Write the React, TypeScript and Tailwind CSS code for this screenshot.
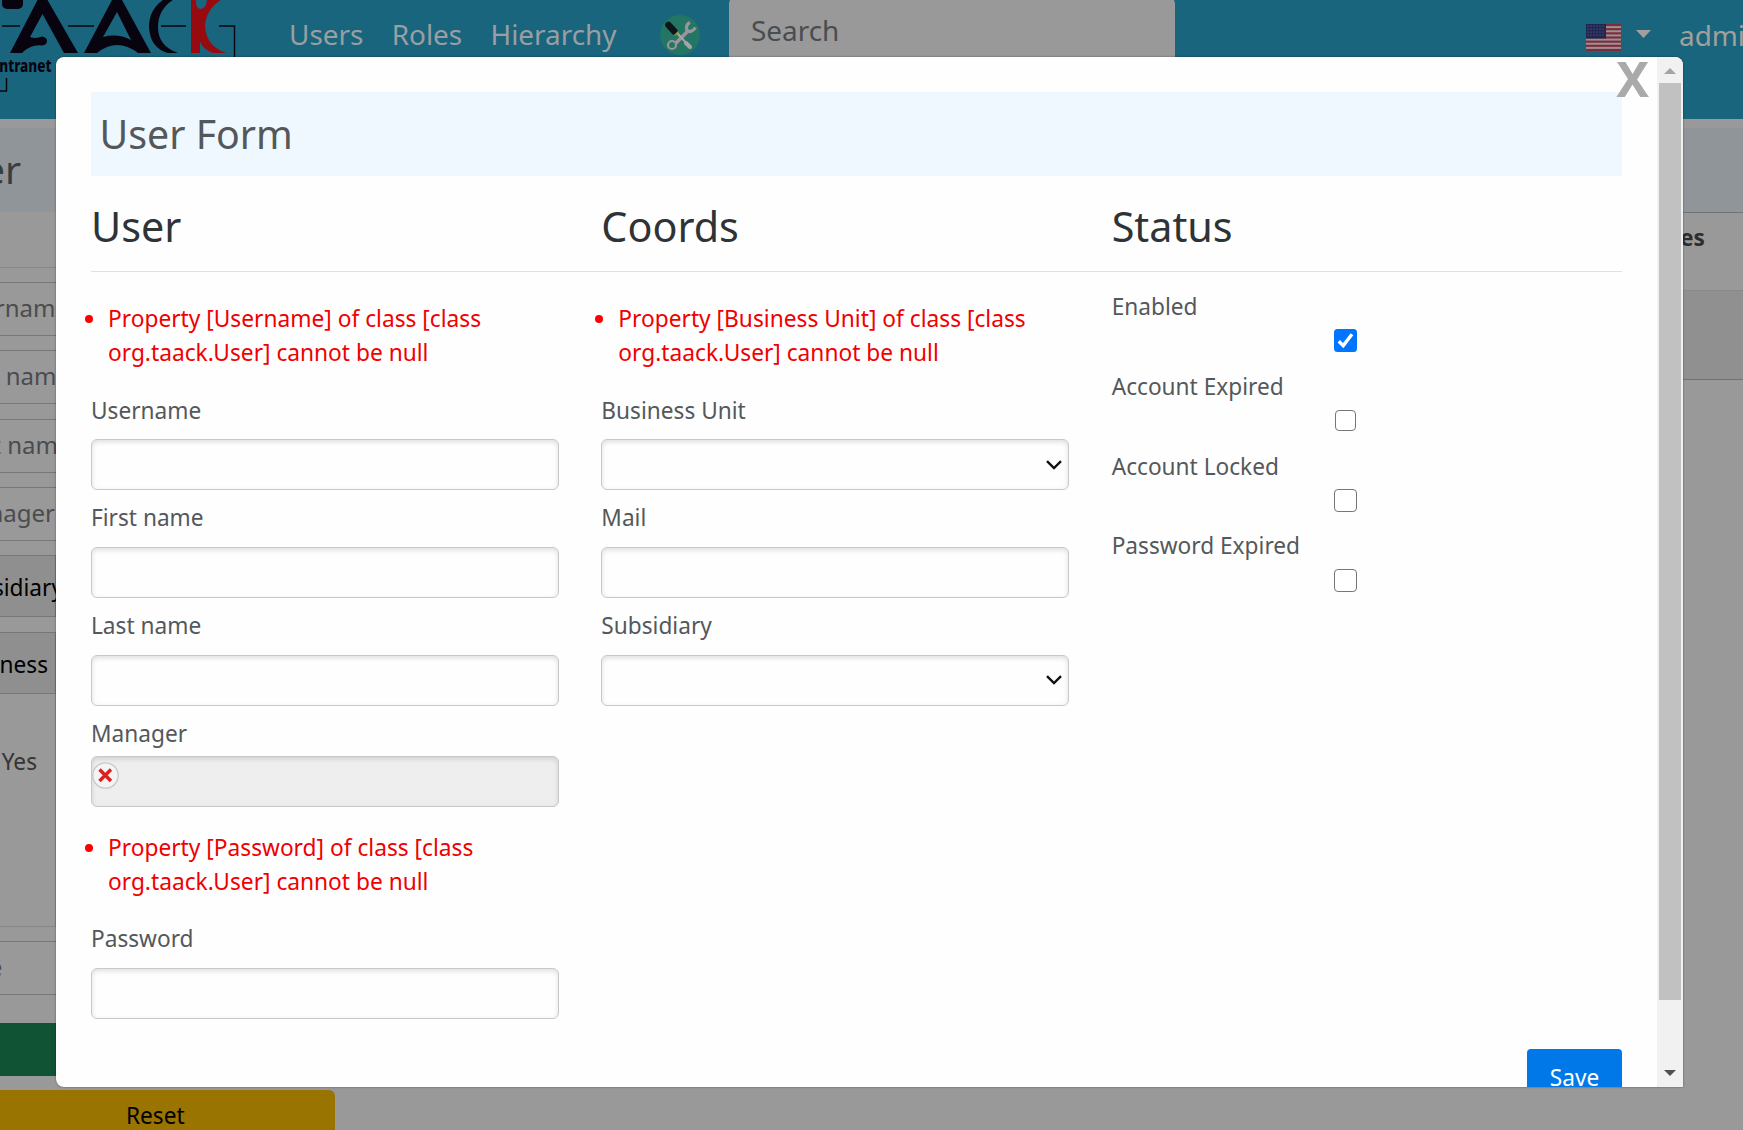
import React from "react";

function Logo() {
  return (
    <svg className="h-[95px] w-[240px] shrink-0" viewBox="0 0 240 95" fill="#08040f">
      <rect x="2" y="-4" width="21" height="13" rx="5" />
      <path d="M2 26H20M68 26H94M161 26H186M219 26H234.500V60M0 91H6.500V78" fill="none" stroke="#08040f" strokeWidth="1.4" />
      <path d="M10 53L37.500 0Q42.500 -4 47.500 0L78 53H64L42.500 14L30 37Q36 39 42 36.500Q47 37 47 41Q47 45 42 45.500Q31 44 22 53Z" />
      <path fillRule="evenodd" d="M84 53L112 0Q117 -4 122 0L151 53H138Q117 37 97 53ZM117 12L103 37Q118 33 131 40Z" />
      <path d="M166 -2Q149 8 149 27Q150 48 168 53H178Q158 46 158 27Q158 8 176 -2Z" />
      <path fill="#970b10" d="M191 -2H196Q195 9 201 9Q207 8 207 -2H224Q206 8 205 26Q206 46 226 53H213Q204 50 200 42V53H191Z" />
      <text x="-5" y="71.500" fontSize="17.500" fontWeight="800" fontFamily="Noto Sans, sans-serif" textLength="56.500" lengthAdjust="spacingAndGlyphs">intranet</text>
    </svg>
  );
}

function ToolsIcon() {
  return (
    <svg className="h-[42px] w-[42px] shrink-0" viewBox="0 0 42 42">
      <circle cx="21" cy="21" r="20" fill="#237564" />
      <g strokeLinecap="round" fill="none">
        <path d="M14 32L29 17" stroke="#9b949b" strokeWidth="3.600" />
        <circle cx="13" cy="31" r="4" stroke="#9b949b" strokeWidth="2.200" fill="#237564" />
        <path d="M31 8.500Q26 11 28 17Q33 19 36.500 13.500" stroke="#9b949b" strokeWidth="3.200" strokeLinecap="butt" />
        <path d="M18 19L31 33" stroke="#a9a3a9" strokeWidth="2" />
        <path d="M27 29L31 33" stroke="#a9a3a9" strokeWidth="4" />
        <path d="M9.500 11L15.500 17.500" stroke="#0d151b" strokeWidth="6.500" />
        <path d="M16 21L19 18" stroke="#8f9b2c" strokeWidth="1.500" />
      </g>
    </svg>
  );
}

function Flag() {
  return (
    <svg className="h-[27px] w-[35px] shrink-0" viewBox="0 0 35 27">
      <rect width="35" height="27" fill="#9a8f92" />
      {[0, 2, 4, 6, 8, 10, 12].map((i) => (
        <rect key={i} y={i * 2.077} width="35" height="2.077" fill="#7d2b3b" />
      ))}
      <rect width="20" height="14.500" fill="#20264f" />
      {[2, 5, 8, 11].map((y) =>
        [2, 5, 8, 11, 14, 17].map((x) => <circle key={x + "-" + y} cx={x} cy={y} r="0.6" fill="#71769a" />)
      )}
    </svg>
  );
}

function Header() {
  return (
    <header className="flex h-[119px] items-start overflow-hidden bg-[#19657d] text-[27.900px] leading-[42px] text-[#999fa3]">
      <Logo />
      <nav className="ml-[49px] flex gap-[28.300px] whitespace-nowrap pt-[12.500px]">
        <a>Users</a>
        <a>Roles</a>
        <a>Hierarchy</a>
      </nav>
      <div className="ml-[42.500px] mt-[14px] flex w-[70px] shrink-0">
        <ToolsIcon />
      </div>
      <div className="-mt-1 h-[68px] w-[446px] shrink-0 rounded-[8px] bg-[#999] pl-[22px] pt-[12.500px] text-[#494c50]">Search</div>
      <div className="ml-[411px] mt-6 flex shrink-0 items-start">
        <Flag />
        <svg className="ml-[15px] mt-[6px] h-[8px] w-[15px]" viewBox="0 0 15 8">
          <path d="M0 0H15L7.500 8Z" fill="#a3a09c" />
        </svg>
      </div>
      <span className="ml-[28px] mt-[13.500px] text-[#a3a09c]">admin</span>
    </header>
  );
}

function FilterInput({ text, shift }: { text: string; shift: string }) {
  return (
    <div className="mb-[14.300px] flex h-[54px] items-center justify-end border-y border-[#777] pb-[2px] text-[24px] text-[#4a4c4e]">
      <span className={"whitespace-nowrap " + shift}>{text}</span>
    </div>
  );
}

function FilterSelect({ text, shift }: { text: string; shift: string }) {
  return (
    <div className="mb-[15px] flex h-[62px] items-center justify-end border-y border-r border-[#777] bg-[#8f8f8f] text-black">
      <span className={"whitespace-nowrap pt-[3px] " + shift}>{text}</span>
    </div>
  );
}

function Background() {
  return (
    <div className="flex items-start justify-between">
      <div className="w-[335px] pt-[9px]">
        <div className="h-[84px] bg-[#909599] pt-[11px] text-[39px] leading-[60px] text-[#3a3d40]">
          <div className="flex w-[21px] justify-end">User</div>
        </div>
        <div className="mb-[14px] h-[56px] border-b border-[#868686]" />
        <div className="flex w-[56px] flex-col">
          <FilterInput text="Username" shift="-mr-[13px]" />
          <FilterInput text="First name" shift="-mr-[14px]" />
          <FilterInput text="Last name" shift="-mr-[15.500px]" />
          <FilterInput text="Manager" shift="mr-px" />
          <FilterSelect text="Subsidiary" shift="-mr-[8px]" />
          <FilterSelect text="Business" shift="mr-[7px]" />
          <div className="-mt-[15px] mb-[14px] h-[233px] border-b border-r border-[#868686] pt-[51px] text-right text-[#333536]">
            <div className="pr-[18px]">Yes</div>
          </div>
          <div className="mb-[28px] flex h-[54px] items-center border-y border-[#777] text-[#4a4c4e]">
            <span className="-ml-[10.500px]">e</span>
          </div>
          <div className="h-[53px] bg-[#105334]" />
        </div>
        <div className="mt-[14px] h-[53px] rounded-r-[6px] bg-[#997400] pl-[126px] pt-[9px] text-black">Reset</div>
      </div>
      <div className="w-[60px] pt-[9px]">
        <div className="h-[85px] border-b border-[#6f7376] bg-[#909599]" />
        <div className="h-[77px] pt-[8px] font-bold text-[#2b2d2f]">
          <div className="flex w-[22px] justify-end">Roles</div>
        </div>
        <div className="h-[90px] border-b border-t border-b-[#6f7376] border-t-[#898989] bg-[#909090]" />
      </div>
    </div>
  );
}

const box =
  "h-[51px] rounded-[6px] border border-[#c8c8c8] shadow-[inset_0_2px_5px_rgba(0,0,0,0.13)]";

function Field({ label, children, tight }: { label: string; children?: React.ReactNode; tight?: boolean }) {
  return (
    <div className={tight ? "flex flex-col gap-[5px]" : "flex flex-col gap-[11.600px] pb-[11.200px]"}>
      <label>{label}</label>
      {children ?? <div className={box + " bg-[#fefefe]"} />}
    </div>
  );
}

function SelectBox() {
  return (
    <div className={box + " flex items-center justify-end bg-[#fefefe] pr-[6px]"}>
      <svg className="h-[10px] w-[16px]" viewBox="0 0 16 10" fill="none" stroke="#111" strokeWidth="2.400">
        <path d="M1 1.200L8 8L15 1.200" />
      </svg>
    </div>
  );
}

function ErrorList({ name }: { name: string }) {
  return (
    <ul className="mb-[23.300px] list-disc pl-[17px] text-[22.730px] text-[#f00000] marker:text-[#ff0000]">
      <li>
        Property [{name}] of class [class
        <br />
        org.taack.User] cannot be null
      </li>
    </ul>
  );
}

function Check({ label, checked, small }: { label: string; checked?: boolean; small?: boolean }) {
  return (
    <div className="flex h-[79.670px] flex-col">
      <label>{label}</label>
      <div className="flex w-[468px] justify-center">
        {checked ? (
          <svg className="mt-[5px] h-[23px] w-[23px]" viewBox="0 0 23 23">
            <rect width="23" height="23" rx="3.500" fill="#0075ff" />
            <path d="M4.800 12.200L9.200 16.600L18 5.200" fill="none" stroke="#fff" strokeWidth="3.400" />
          </svg>
        ) : (
          <div
            className={
              "rounded-[4px] border-[1.500px] border-[#767676] bg-white " +
              (small ? "mt-[6px] h-[21px] w-[21px]" : "mt-[5.500px] h-[23px] w-[23px]")
            }
          />
        )}
      </div>
    </div>
  );
}

function Modal() {
  return (
    <div className="absolute left-[56px] top-[57px] flex h-[1030px] w-[1627px] overflow-hidden rounded-[8px] rounded-br-none bg-[#fefefe] text-[#54585b] shadow-[0_0_2px_rgba(0,0,0,0.5)]">
      <div className="flex w-[1601px] shrink-0 flex-col pl-[35px] pr-[35px] pt-[35px]">
        <h1 className="h-[83.500px] shrink-0 bg-[#f0f8ff] pl-[8.500px] pt-[12px] text-[39.300px] leading-[60px] text-[#54585b]">User Form</h1>
        <div className="grid shrink-0 grid-cols-3 border-b border-[#dee2e6] pb-[17px] pt-[23.500px] text-[41.300px] leading-[55px] text-[#2f3336]">
          <h2>User</h2>
          <h2>Coords</h2>
          <h2>Status</h2>
        </div>
        <div className="grid h-[777px] shrink-0 grid-cols-3">
          <section className="w-[468px] pt-[30.300px]">
            <ErrorList name="Username" />
            <Field label="Username" />
            <Field label="First name" />
            <Field label="Last name" />
            <Field label="Manager" tight>
              <div className={box + " bg-[#eee] pt-[5px]"}>
                <svg className="h-[27px] w-[27px]" viewBox="0 0 27 27">
                  <circle cx="13.500" cy="13.500" r="12.700" fill="#f4f4f4" stroke="#c8c8c8" strokeWidth="1.300" />
                  <path d="M7.500 7.500L19 19M19 7.500L7.500 19" stroke="#dc1f1f" strokeWidth="3.400" />
                </svg>
              </div>
            </Field>
            <div className="h-[24px]" />
            <ErrorList name="Password" />
            <Field label="Password" />
          </section>
          <section className="w-[468px] pt-[30.300px]">
            <ErrorList name="Business Unit" />
            <Field label="Business Unit">
              <SelectBox />
            </Field>
            <Field label="Mail" />
            <Field label="Subsidiary">
              <SelectBox />
            </Field>
          </section>
          <section className="pt-[18.300px]">
            <Check label="Enabled" checked />
            <Check label="Account Expired" small />
            <Check label="Account Locked" />
            <Check label="Password Expired" />
          </section>
        </div>
        <button className="h-[56px] w-[95px] shrink-0 self-end rounded-[4px] bg-[#0078e7] pt-[2px] text-white">Save</button>
      </div>
      <span className="absolute right-[34px] top-[-10px] text-[49px] font-bold leading-[62px] text-[#aaa]">X</span>
      <div className="flex w-[26px] flex-col items-center bg-[#f1f1f1]">
        <svg className="h-[26px] w-[26px] shrink-0" viewBox="0 0 26 26">
          <path d="M7 17H19L13 11Z" fill="#a3a3a3" />
        </svg>
        <div className="h-[917px] w-[22px] bg-[#c1c1c1]" />
        <svg className="mt-auto h-[26px] w-[26px] shrink-0" viewBox="0 0 26 26">
          <path d="M7 9H19L13 15Z" fill="#505050" />
        </svg>
      </div>
    </div>
  );
}

export default function App() {
  return (
    <div className="relative h-[1130px] w-[1743px] overflow-hidden bg-[#999] font-['Noto_Sans',sans-serif] text-[22.670px] leading-[34px]">
      <Header />
      <Background />
      <Modal />
    </div>
  );
}
